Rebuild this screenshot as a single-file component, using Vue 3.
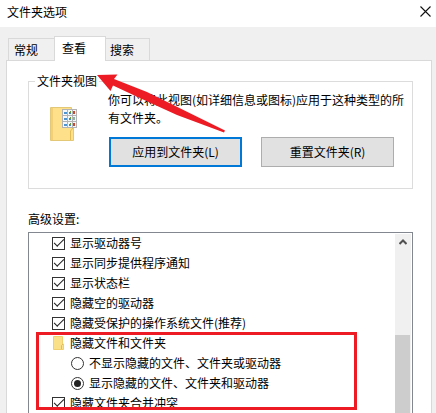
<template>
  <div class="dialog">
    <header class="title-bar">
      <h1>文件夹选项</h1>
      <button class="close" type="button" aria-label="关闭">
        <svg width="11" height="11" viewBox="0 0 11 11">
          <path d="M0.5 0.5 L10.5 10.5 M10.5 0.5 L0.5 10.5" />
        </svg>
      </button>
    </header>

    <nav class="tabs" role="tablist">
      <button
        v-for="tab in tabs"
        :key="tab"
        type="button"
        role="tab"
        class="tab"
        :class="{ active: tab === activeTab }"
        :aria-selected="tab === activeTab"
        @click="activeTab = tab"
      >{{ tab }}</button>
    </nav>

    <main class="panel">
      <section class="group">
        <h2>文件夹视图</h2>
        <svg class="folder" width="27" height="36" viewBox="0 0 27 36">
          <path d="M0.5 0.5 H21.5 V21 H23.5 V33.5 H0.5 Z" fill="#fee08a" stroke="#e3c878" />
          <path d="M1 1 H3 V33 H1 Z" fill="#f3d078" />
          <path d="M20.5 33 V24 L23 21" fill="none" stroke="#e2bd55" />
          <rect x="12" y="2" width="15" height="19" fill="#b3b3b3" />
          <g v-for="y in [3, 9, 15]" :key="y">
            <rect x="13" :y="y" width="4" height="5" fill="#f4f8fb" />
            <rect x="18" :y="y" width="4" height="5" fill="#f4f8fb" />
            <rect x="23" :y="y" width="3" height="5" fill="#f4f8fb" />
            <rect x="14" :y="y + 2" width="3" height="2" fill="#4f94cf" />
            <rect x="19" :y="y + 2" width="2" height="2" fill="#3f86c8" />
            <rect x="20" :y="y + 1" width="1" height="2" fill="#6c9b45" />
            <rect x="23" :y="y + 1" width="2" height="3" :fill="y === 9 ? '#8fb3a6' : '#c8472f'" />
          </g>
        </svg>
        <div class="group-body">
          <p>你可以将此视图(如详细信息或图标)应用于这种类型的所有文件夹。</p>
          <div class="buttons">
            <button type="button" class="btn primary">应用到文件夹(L)</button>
            <button type="button" class="btn">重置文件夹(R)</button>
          </div>
        </div>
        <svg class="arrow" width="128" height="58" viewBox="0 0 128 58">
          <path d="M0 0 L20.5 -0.5 L17 4 L50 17 L128 55.5 L127 57.5 L80 40 L46 24.5 L16 10.5 L13.5 16 Z" fill="#ed1c24" />
        </svg>
      </section>

      <h2 class="list-label">高级设置:</h2>
      <div class="list">
        <div class="rows">
          <label v-for="item in options" :key="item" class="row">
            <input type="checkbox" checked />
            <span>{{ item }}</span>
          </label>

          <div class="highlight">
            <div class="row">
              <svg width="13" height="14" viewBox="0 0 13 14">
                <path d="M1.5 0.5 H10.5 V8 H11.5 V13.5 H1.5 Z" fill="#fbe08a" stroke="#f0cf6e" />
                <path d="M9.5 13 V9.5 L11 8" fill="none" stroke="#e2bd55" />
              </svg>
              <span>隐藏文件和文件夹</span>
            </div>
            <label v-for="item in hiddenModes" :key="item" class="row nested">
              <input v-model="hiddenMode" type="radio" name="hidden" :value="item" />
              <span>{{ item }}</span>
            </label>
            <label class="row">
              <input type="checkbox" checked />
              <span>隐藏文件夹合并冲突</span>
            </label>
          </div>
        </div>

        <div class="scrollbar">
          <button type="button" aria-label="向上滚动">
            <svg width="8" height="7" viewBox="0 0 8 7">
              <path d="M0.5 5 L4 1.5 L7.5 5" />
            </svg>
          </button>
          <div class="thumb"></div>
        </div>
      </div>
    </main>
  </div>
</template>

<script setup>
import { ref } from 'vue'

const tabs = ['常规', '查看', '搜索']
const activeTab = ref('查看')

const options = [
  '显示驱动器号',
  '显示同步提供程序通知',
  '显示状态栏',
  '隐藏空的驱动器',
  '隐藏受保护的操作系统文件(推荐)'
]

const hiddenModes = [
  '不显示隐藏的文件、文件夹或驱动器',
  '显示隐藏的文件、文件夹和驱动器'
]
const hiddenMode = ref(hiddenModes[1])
</script>

<style>
body {
  margin: 0;
  background: #f0f0f0;
}
</style>

<style scoped>
.dialog,
.dialog * {
  box-sizing: border-box;
}

.dialog {
  display: flex;
  flex-direction: column;
  height: 100vh;
  overflow: hidden;
  background: #f0f0f0;
  color: #000;
  font-family: "Noto Sans CJK SC", sans-serif;
  font-size: 12px;
  line-height: 18px;
}

button {
  margin: 0;
  padding: 0;
  font: inherit;
  color: inherit;
}

h1,
h2,
p {
  margin: 0;
  font-size: 12px;
  font-weight: 400;
}

.title-bar {
  display: flex;
  flex: none;
  align-items: center;
  justify-content: space-between;
  height: 27px;
  padding: 0 5px 4px 7px;
  background: #fff;
}

.close {
  display: flex;
  border: 0;
  background: none;
}

.close path {
  fill: none;
  stroke: #111;
  stroke-width: 1.1;
}

.tabs {
  display: flex;
  flex: none;
  align-items: flex-end;
  height: 34px;
  padding-left: 8px;
}

.tab {
  height: 23px;
  padding: 0 16px 0 5px;
  border: 1px solid #d9d9d9;
  background: #f0f0f0;
}

.tab:first-child {
  border-right: 0;
}

.tab:last-child {
  padding: 0 15px 0 4px;
  border-left: 0;
}

.tab.active {
  z-index: 1;
  height: 25px;
  padding: 0 19px 3px 7px;
  border-bottom: 0;
  background: #fff;
}

.panel {
  display: flex;
  flex: 1;
  flex-direction: column;
  min-height: 0;
  margin: -1px 4px 0 6px;
  padding: 20px 18px 0 21px;
  border: 1px solid #d9d9d9;
  border-bottom: 0;
  background: #fff;
}

.group {
  position: relative;
  display: flex;
  flex: none;
  height: 108px;
  border: 1px solid #dcdcdc;
}

.group h2 {
  position: absolute;
  top: -10px;
  left: 6px;
  padding: 0 2px;
  background: #fff;
}

.folder {
  flex: none;
  margin: 25px 0 0 21px;
}

.group-body {
  flex: 1;
  margin: 9px 4px 0 31px;
}

.buttons {
  display: grid;
  grid-template-columns: 1fr 1fr;
  gap: 19px;
  margin: 10px 14px 0 1px;
}

.btn {
  height: 30px;
  border: 1px solid #adadad;
  background: #e1e1e1;
}

.btn.primary {
  border: 2px solid #0078d7;
}

.arrow {
  position: absolute;
  top: -7px;
  left: 68px;
  overflow: visible;
  pointer-events: none;
}

.list-label {
  flex: none;
  margin: 21px 0 4px;
}

.list {
  display: flex;
  flex: 1;
  min-height: 0;
  padding-right: 1px;
  border: 1px solid #828790;
  border-bottom: 0;
}

.rows {
  flex: 1;
}

.row {
  display: flex;
  align-items: center;
  gap: 5px;
  height: 20px;
  padding-left: 23px;
  white-space: nowrap;
}

.highlight {
  height: 78px;
  margin: -1px 38px 0 7px;
  overflow: hidden;
  border: 3px solid #ed1c24;
}

.highlight .row {
  padding-left: 13px;
}

.highlight .row:first-child {
  margin-top: -2px;
}

.highlight .nested {
  padding-left: 32px;
}

input {
  display: grid;
  flex: none;
  place-items: center;
  width: 13px;
  height: 13px;
  margin: 0;
  appearance: none;
  border: 1px solid #333;
  background: #fff;
}

input[type="checkbox"]:checked::before {
  width: 9px;
  height: 4px;
  margin-top: -3px;
  border: solid #222;
  border-width: 0 0 1px 1px;
  content: "";
  transform: rotate(-45deg);
}

input[type="radio"] {
  border-radius: 50%;
}

input[type="radio"]:checked::before {
  width: 7px;
  height: 7px;
  border-radius: 50%;
  background: #222;
  content: "";
}

.scrollbar {
  display: flex;
  flex: none;
  flex-direction: column;
  width: 16px;
  margin-top: 1px;
  background: #f0f0f0;
}

.scrollbar button {
  display: flex;
  align-items: center;
  justify-content: center;
  height: 17px;
  border: 0;
  background: none;
}

.scrollbar path {
  fill: none;
  stroke: #505050;
  stroke-width: 2;
}

.thumb {
  flex: 1;
  width: 15px;
  margin-top: 84px;
  background: #cdcdcd;
}
</style>
